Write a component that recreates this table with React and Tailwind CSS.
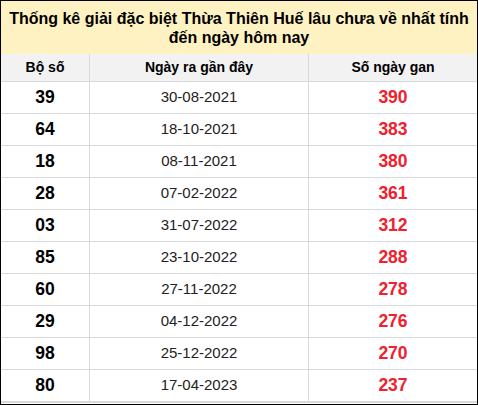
import React from "react";

const rows = [
  ["39", "30-08-2021", "390"],
  ["64", "18-10-2021", "383"],
  ["18", "08-11-2021", "380"],
  ["28", "07-02-2022", "361"],
  ["03", "31-07-2022", "312"],
  ["85", "23-10-2022", "288"],
  ["60", "27-11-2022", "278"],
  ["29", "04-12-2022", "276"],
  ["98", "25-12-2022", "270"],
  ["80", "17-04-2023", "237"],
];

const App = () => {
  return (
    <div className="w-[478px] h-[405px] bg-white border border-black font-['Liberation_Sans',Arial,sans-serif] overflow-hidden">
      <div className="h-[53px] bg-[#fff2c2] flex items-center justify-center text-center text-[16px] leading-[19px] font-bold text-black px-2">
        <p>
          Thống kê giải đặc biệt Thừa Thiên Huế lâu chưa về nhất tính
          <br />
          đến ngày hôm nay
        </p>
      </div>
      <div className="grid grid-cols-[89px_219px_1fr] h-[28px] bg-[#f2f2f2] border-b border-[#d9d9d9] text-[14px] font-bold text-black">
        <div className="flex items-center justify-center border-r border-[#d9d9d9]">Bộ số</div>
        <div className="flex items-center justify-center border-r border-[#d9d9d9]">Ngày ra gần đây</div>
        <div className="flex items-center justify-center">Số ngày gan</div>
      </div>
      {rows.map(([bo, date, gan], i) => (
        <div
          key={bo}
          className={
            i === rows.length - 1
              ? "grid grid-cols-[89px_219px_1fr] h-[33px] border-b-2 border-[#d9d9d9]"
              : "grid grid-cols-[89px_219px_1fr] h-[32px] border-b border-[#d9d9d9]"
          }
        >
          <div className="flex items-center justify-center border-r border-[#d9d9d9] text-[17.5px] font-bold text-black">{bo}</div>
          <div className="flex items-center justify-center border-r border-[#d9d9d9] text-[15px] text-[#222]">{date}</div>
          <div className="flex items-center justify-center text-[17.5px] font-bold text-[#f0202e]">{gan}</div>
        </div>
      ))}
    </div>
  );
};

export default App;
